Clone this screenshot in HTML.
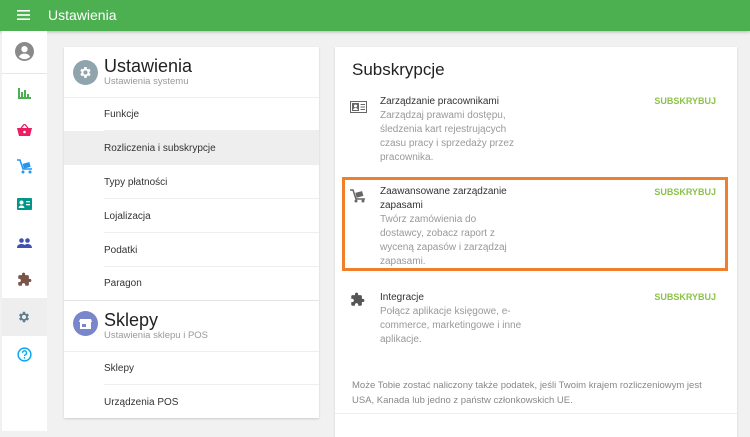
<!DOCTYPE html>
<html><head><meta charset="utf-8"><style>
*{margin:0;padding:0;box-sizing:border-box}
body{width:750px;height:431px;overflow:hidden;background:#f1f1f1;font-family:"Liberation Sans","DejaVu Sans",sans-serif;position:relative}
.top{position:absolute;left:0;top:0;width:750px;height:31px;background:#4caf50;color:#fff;box-shadow:0 1px 3px rgba(0,0,0,.25)}
.top .t{position:absolute;left:48px;top:7px;font-size:14px}
.side{position:absolute;left:2px;top:31px;width:45px;height:400px;background:#fff}
.ic{position:absolute;left:0;width:45px;text-align:center}
.card{position:absolute;background:#fff;box-shadow:0 1px 2px rgba(0,0,0,.15)}
.it{position:absolute;left:40px;right:0;height:34px;font-size:10px;color:#333;line-height:36px;border-bottom:1px solid #eee}
.h1{position:absolute;left:40px;font-size:18px;color:#222}
.sub{position:absolute;left:40px;font-size:9.5px;color:#999}
.rt{position:absolute;left:45px;font-size:10px;color:#333;line-height:14px;width:140px}
.rt span{color:#999}
.sb{position:absolute;right:21px;font-size:9px;font-weight:bold;color:#8bc34a}
.ri{position:absolute;left:15px}
</style></head><body>
<div class="top">
<svg style="position:absolute;left:17px;top:10px" width="13" height="10"><rect y="0" width="13" height="1.6" fill="#fff"/><rect y="4.2" width="13" height="1.6" fill="#fff"/><rect y="8.4" width="13" height="1.6" fill="#fff"/></svg>
<div class="t">Ustawienia</div></div>
<div class="side">
<svg class="ic" style="top:11px;left:13px;width:19px" width="19" height="19" viewBox="0 0 20 20"><circle cx="10" cy="10" r="10" fill="#8a8a8a"/><circle cx="10" cy="7.5" r="3.3" fill="#fff"/><path d="M4 15.5c1.5-2.5 3.5-3.3 6-3.3s4.5.8 6 3.3c-1.6 1.6-3.7 2.5-6 2.5s-4.4-.9-6-2.5z" fill="#fff"/></svg>
<div style="position:absolute;left:0;top:42px;width:45px;border-top:1px solid #e6e6e6"></div>
<svg style="position:absolute;left:16px;top:56px" width="13" height="12"><rect x="0" y="1" width="2" height="11" fill="#4caf50"/><rect x="3" y="5" width="2" height="7" fill="#4caf50"/><rect x="6" y="3" width="2" height="9" fill="#4caf50"/><rect x="9" y="7" width="2" height="5" fill="#4caf50"/><rect x="0" y="10" width="13" height="2" fill="#4caf50"/></svg>
<svg style="position:absolute;left:15px;top:93px" width="15" height="12"><path d="M0 4h15l-2 8H2z" fill="#e91e63"/><path d="M4 4l3.5-4 3.5 4" stroke="#e91e63" stroke-width="1.3" fill="none"/><circle cx="7.5" cy="8" r="1.3" fill="#fff"/></svg>
<svg style="position:absolute;left:15px;top:128px" width="15" height="15"><path d="M0 1h3l3 9h9" stroke="#2196f3" stroke-width="1.5" fill="none"/><rect x="6" y="4" width="7" height="5" fill="#2196f3" transform="rotate(-15 9 6)"/><circle cx="6" cy="13" r="1.5" fill="#2196f3"/><circle cx="13" cy="13" r="1.5" fill="#2196f3"/></svg>
<svg style="position:absolute;left:15px;top:167px" width="15" height="12"><rect width="15" height="12" rx="1" fill="#009688"/><circle cx="4.5" cy="4.5" r="2" fill="#fff"/><path d="M1.5 10c.5-2 1.5-2.5 3-2.5s2.5.5 3 2.5z" fill="#fff"/><rect x="9" y="3" width="4" height="1.3" fill="#fff"/><rect x="9" y="6" width="4" height="1.3" fill="#fff"/></svg>
<svg style="position:absolute;left:15px;top:207px" width="15" height="10"><circle cx="4.5" cy="2.5" r="2.3" fill="#3f51b5"/><circle cx="10.5" cy="2.5" r="2.3" fill="#3f51b5"/><path d="M0 10c0-3 2-4 4.5-4s4.5 1 4.5 4zM7 10c0-3 1.5-4 3.5-4S15 7 15 10z" fill="#3f51b5"/></svg>
<svg style="position:absolute;left:15px;top:241px" width="15" height="15" viewBox="0 0 24 24"><path d="M20.5 11H19V7c0-1.1-.9-2-2-2h-4V3.5a2.5 2.5 0 0 0-5 0V5H4c-1.1 0-2 .9-2 2v3.8h1.5c1.5 0 2.7 1.2 2.7 2.7S5 16.2 3.5 16.2H2V20c0 1.1.9 2 2 2h3.8v-1.5c0-1.5 1.2-2.7 2.7-2.7s2.7 1.2 2.7 2.7V22H17c1.1 0 2-.9 2-2v-4h1.5a2.5 2.5 0 0 0 0-5z" fill="#795548"/></svg>
<div style="position:absolute;left:0;top:267px;width:45px;height:38px;background:#eee"></div>
<svg style="position:absolute;left:15px;top:279px" width="14" height="14" viewBox="0 0 24 24"><path d="M19.4 13a7.5 7.5 0 0 0 0-2l2.1-1.6-2-3.5-2.5 1a7 7 0 0 0-1.7-1L15 3h-4l-.4 2.9a7 7 0 0 0-1.7 1l-2.5-1-2 3.5L6.6 11a7.5 7.5 0 0 0 0 2l-2.1 1.6 2 3.5 2.5-1a7 7 0 0 0 1.7 1L11 21h4l.4-2.9a7 7 0 0 0 1.7-1l2.5 1 2-3.5zM13 15.5a3.5 3.5 0 1 1 0-7 3.5 3.5 0 0 1 0 7z" fill="#607d8b" transform="translate(-1 0)"/></svg>
<svg style="position:absolute;left:15px;top:316px" width="15" height="15" viewBox="0 0 20 20"><circle cx="10" cy="10" r="8.5" stroke="#03a9f4" stroke-width="2" fill="none"/><path d="M7.3 7.8a2.7 2.7 0 1 1 3.8 2.5c-.8.4-1.1.9-1.1 1.8" stroke="#03a9f4" stroke-width="1.8" fill="none"/><circle cx="10" cy="14.5" r="1.1" fill="#03a9f4"/></svg>
</div>

<div class="card" style="left:64px;top:47px;width:255px;height:371px">
<svg style="position:absolute;left:9px;top:13px" width="25" height="25" viewBox="0 0 24 24"><circle cx="12" cy="12" r="12" fill="#90a4ae"/><g transform="translate(5 5) scale(.58)"><path d="M19.4 13a7.5 7.5 0 0 0 0-2l2.1-1.6-2-3.5-2.5 1a7 7 0 0 0-1.7-1L15 3h-4l-.4 2.9a7 7 0 0 0-1.7 1l-2.5-1-2 3.5L6.6 11a7.5 7.5 0 0 0 0 2l-2.1 1.6 2 3.5 2.5-1a7 7 0 0 0 1.7 1L11 21h4l.4-2.9a7 7 0 0 0 1.7-1l2.5 1 2-3.5zM13 15.5a3.5 3.5 0 1 1 0-7 3.5 3.5 0 0 1 0 7z" fill="#fff" transform="translate(-1 0)"/></g></svg>
<div class="h1" style="top:9px">Ustawienia</div>
<div class="sub" style="top:29px">Ustawienia systemu</div>
<div style="position:absolute;left:0;right:0;top:50px;border-top:1px solid #eee"></div>
<div class="it" style="top:50px">Funkcje</div>
<div style="position:absolute;left:0;right:0;top:84px;height:34px;background:#eee"></div>
<div class="it" style="top:84px;border:0">Rozliczenia i subskrypcje</div>
<div class="it" style="top:118px">Typy płatności</div>
<div class="it" style="top:152px">Lojalizacja</div>
<div class="it" style="top:186px">Podatki</div>
<div class="it" style="top:219px;border:0">Paragon</div>
<div style="position:absolute;left:0;right:0;top:253px;border-top:1px solid #e4e4e4"></div>
<svg style="position:absolute;left:9px;top:264px" width="25" height="25"><circle cx="12.5" cy="12.5" r="12.5" fill="#7986cb"/><path d="M7 8h11l1 3H6z" fill="#fff"/><rect x="7" y="11" width="11" height="7" fill="#fff"/><rect x="9" y="13" width="4" height="3" fill="#7986cb"/></svg>
<div class="h1" style="top:263px">Sklepy</div>
<div class="sub" style="top:283px">Ustawienia sklepu i POS</div>
<div style="position:absolute;left:0;right:0;top:304px;border-top:1px solid #eee"></div>
<div class="it" style="top:304px">Sklepy</div>
<div class="it" style="top:338px;border:0">Urządzenia POS</div>
</div>

<div class="card" style="left:335px;top:47px;width:402px;height:390px">
<div style="position:absolute;left:17px;top:13px;font-size:17px;color:#222">Subskrypcje</div>
<svg class="ri" style="top:54px" width="17" height="12"><rect x=".5" y=".5" width="16" height="11" fill="#fff" stroke="#666"/><rect x="2" y="2" width="7" height="8" fill="#666"/><circle cx="5.5" cy="5" r="1.5" fill="#fff"/><path d="M3 9c.5-1.5 1.3-2 2.5-2s2 .5 2.5 2z" fill="#fff"/><rect x="10.5" y="3" width="4.5" height="1" fill="#666"/><rect x="10.5" y="5.5" width="4.5" height="1" fill="#666"/><rect x="10.5" y="8" width="4.5" height="1" fill="#666"/></svg>
<div class="rt" style="top:48px">Zarządzanie pracownikami<br><span>Zarządzaj prawami dostępu, śledzenia kart rejestrujących czasu pracy i sprzedaży przez pracownika.</span></div>
<div class="sb" style="top:49px">SUBSKRYBUJ</div>
<div style="position:absolute;left:7px;top:130px;width:386px;height:94px;border:3px solid #f07f2c"></div>
<svg class="ri" style="top:142px" width="16" height="14"><path d="M0 1h3l3 9h9" stroke="#666" stroke-width="1.5" fill="none"/><rect x="6" y="3" width="7" height="5" fill="#666" transform="rotate(-15 9 6)"/><circle cx="6" cy="12" r="1.5" fill="#666"/><circle cx="13" cy="12" r="1.5" fill="#666"/></svg>
<div class="rt" style="top:138px">Zaawansowane zarządzanie zapasami<br><span>Twórz zamówienia do dostawcy, zobacz raport z wyceną zapasów i zarządzaj zapasami.</span></div>
<div class="sb" style="top:140px">SUBSKRYBUJ</div>
<svg class="ri" style="top:245px" width="15" height="15" viewBox="0 0 24 24"><path d="M20.5 11H19V7c0-1.1-.9-2-2-2h-4V3.5a2.5 2.5 0 0 0-5 0V5H4c-1.1 0-2 .9-2 2v3.8h1.5c1.5 0 2.7 1.2 2.7 2.7S5 16.2 3.5 16.2H2V20c0 1.1.9 2 2 2h3.8v-1.5c0-1.5 1.2-2.7 2.7-2.7s2.7 1.2 2.7 2.7V22H17c1.1 0 2-.9 2-2v-4h1.5a2.5 2.5 0 0 0 0-5z" fill="#555"/></svg>
<div class="rt" style="top:244px;width:150px">Integracje<br><span>Połącz aplikacje księgowe, e-commerce, marketingowe i inne aplikacje.</span></div>
<div class="sb" style="top:245px">SUBSKRYBUJ</div>
<div style="position:absolute;left:17px;top:331px;width:362px;font-size:9.5px;line-height:15px;color:#888">Może Tobie zostać naliczony także podatek, jeśli Twoim krajem rozliczeniowym jest USA, Kanada lub jedno z państw członkowskich UE.</div>
<div style="position:absolute;left:0;right:0;top:366px;border-top:1px solid #eee"></div>
</div>
</body></html>
